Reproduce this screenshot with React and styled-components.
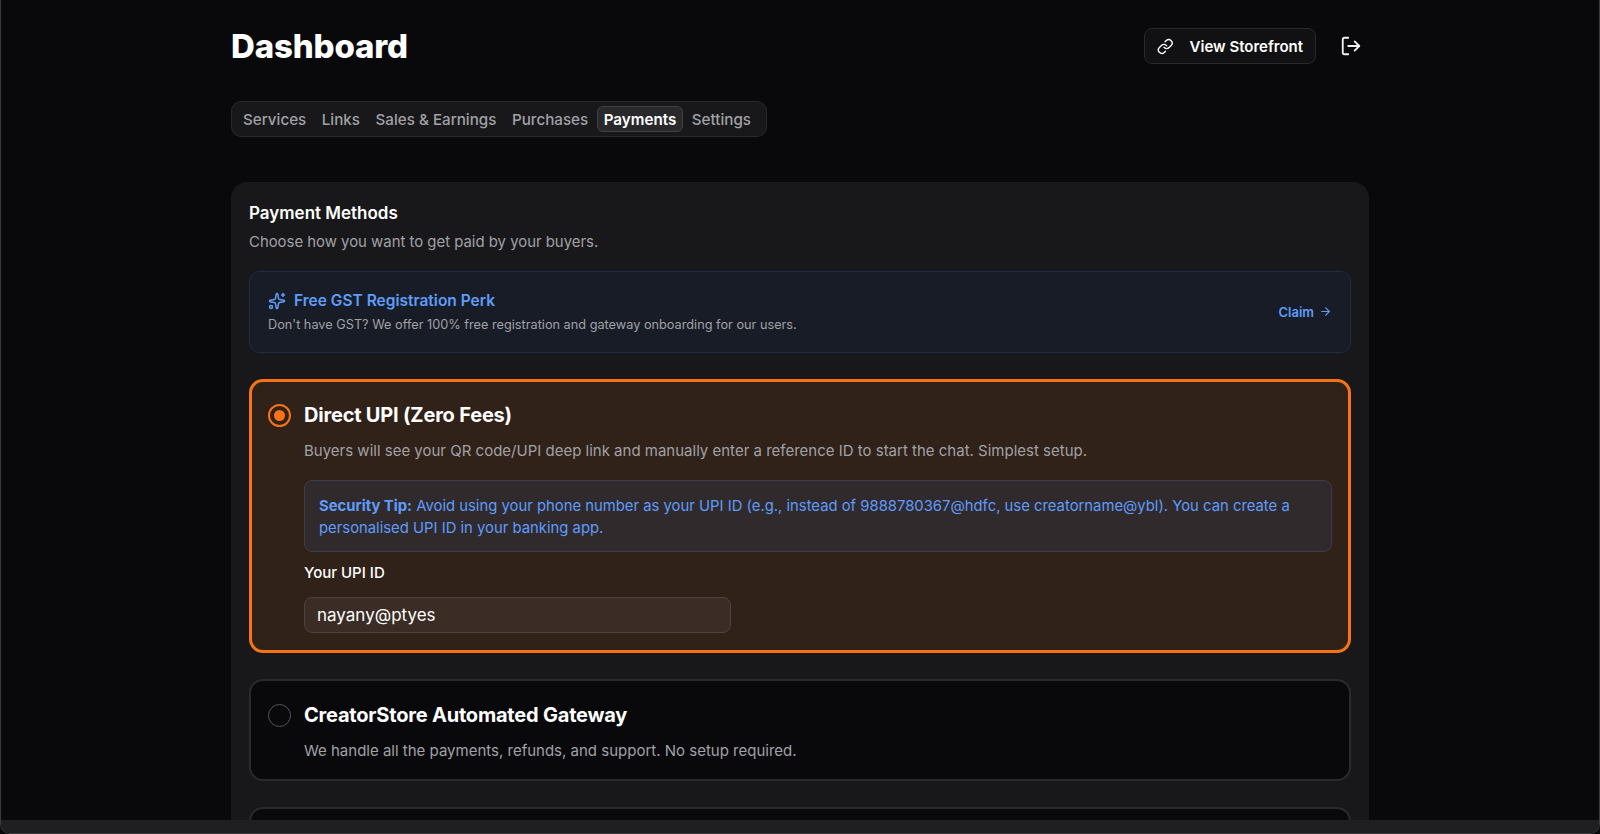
import styled, { createGlobalStyle } from "styled-components";
import { Link, LogOut, Sparkles, ArrowRight } from "lucide-react";

const TABS = ["Services", "Links", "Sales & Earnings", "Purchases", "Payments", "Settings"];

const GlobalStyle = createGlobalStyle`
  html, body {
    margin: 0;
    height: 100%;
    background: #09090b;
  }
  body {
    font-family: Inter, "Liberation Sans", sans-serif;
    color: #fff;
    -webkit-font-smoothing: antialiased;
  }
  * {
    box-sizing: border-box;
  }
`;

const Frame = styled.div`
  height: 834px;
  display: flex;
  flex-direction: column;
  overflow: hidden;
  border-left: 1px solid #3a3a3d;
  border-right: 1px solid #3a3a3d;
  border-bottom: 1px solid #3a3a3d;
  border-radius: 0 0 10px 10px;
`;

const Scroller = styled.div`
  flex: 1;
  min-height: 0;
  overflow: hidden;
`;

const Page = styled.main`
  width: 1138px;
  margin: 0 auto;
  padding-top: 28px;
`;

const Header = styled.header`
  height: 36px;
  display: flex;
  align-items: center;
  justify-content: space-between;
`;

const Title = styled.h1`
  margin: 0;
  font-size: 33px;
  line-height: 36px;
  font-weight: 800;
  letter-spacing: -0.15px;
`;

const HeaderActions = styled.div`
  display: flex;
  align-items: center;
  gap: 24px;
  padding-right: 7px;
`;

const StoreButton = styled.button`
  height: 36px;
  width: 172px;
  display: flex;
  align-items: center;
  gap: 16px;
  padding: 0 12px;
  background: #111113;
  border: 1px solid #29292c;
  border-radius: 8px;
  color: #fff;
  white-space: nowrap;
  font: 600 15px Inter, "Liberation Sans", sans-serif;
`;

const IconButton = styled.button`
  display: flex;
  padding: 0;
  background: none;
  border: 0;
  color: #f2f2f2;
`;

const TabBar = styled.nav`
  display: inline-flex;
  align-items: center;
  height: 36px;
  margin-top: 37px;
  padding: 0 6px 0 4px;
  background: #18181a;
  border: 1px solid #29292c;
  border-radius: 10px;
`;

const Tab = styled.span`
  display: flex;
  align-items: center;
  height: 26px;
  padding: 0 6px;
  margin-right: 1.5px;
  font-size: 15.2px;
  font-weight: ${(p) => (p.$active ? 600 : 500)};
  color: ${(p) => (p.$active ? "#fff" : "#a1a1a6")};
  background: ${(p) => (p.$active ? "#29292b" : "transparent")};
  border: 1px solid ${(p) => (p.$active ? "#414144" : "transparent")};
  border-radius: 6px;
`;

const Panel = styled.section`
  margin-top: 45px;
  padding: 21px 18px 40px;
  background: #18181a;
  border-radius: 16px;
`;

const PanelTitle = styled.h2`
  margin: 0;
  font-size: 17px;
  line-height: 20px;
  font-weight: 600;
`;

const PanelSub = styled.p`
  margin: 9px 0 0;
  font-size: 14.9px;
  line-height: 20px;
  color: #a1a1a6;
`;

const Perk = styled.div`
  height: 82px;
  margin-top: 19px;
  padding: 1px 18px 0;
  display: flex;
  align-items: center;
  justify-content: space-between;
  background: #181c26;
  border: 1px solid #1f2c48;
  border-radius: 10px;
`;

const PerkHead = styled.div`
  display: flex;
  align-items: center;
  gap: 8px;
  color: #5f9cfa;
  font-size: 15.5px;
  line-height: 20px;
  font-weight: 600;
`;

const PerkText = styled.p`
  margin: 5px 0 0;
  font-size: 12.73px;
  line-height: 18px;
  color: #a1a1a6;
`;

const ClaimLink = styled.a`
  display: flex;
  align-items: center;
  gap: 5px;
  margin-bottom: 2px;
  color: #5f9cfa;
  font-size: 13px;
  font-weight: 600;
`;

const Option = styled.div`
  margin-top: 26px;
  padding: ${(p) => (p.$selected ? "17px 16px" : "18px 17px")};
  display: flex;
  gap: 13px;
  min-height: ${(p) => p.$height || "auto"};
  background: ${(p) => (p.$selected ? "#302119" : "#09090b")};
  border: ${(p) => (p.$selected ? "3px solid #f97316" : "2px solid #2a2a2d")};
  border-radius: 14px;
`;

const Radio = styled.span`
  flex: none;
  width: 23px;
  height: 23px;
  margin-top: 5px;
  display: flex;
  align-items: center;
  justify-content: center;
  border: ${(p) => (p.$checked ? "2px solid #f97316" : "1.5px solid #56565a")};
  border-radius: 50%;

  &::after {
    content: "";
    display: ${(p) => (p.$checked ? "block" : "none")};
    width: 11px;
    height: 11px;
    border-radius: 50%;
    background: #f97316;
  }
`;

const OptionBody = styled.div`
  flex: 1;
  min-width: 0;
`;

const OptionTitle = styled.h3`
  margin: 0;
  font-size: 20px;
  line-height: 32px;
  font-weight: 700;
  letter-spacing: -0.2px;
`;

const OptionText = styled.p`
  margin: 10px 0 0;
  font-size: 15px;
  line-height: 20px;
  color: #a1a1a6;
`;

const Tip = styled.div`
  margin-top: 19px;
  padding: 14px 14px 12px;
  background: #302a2d;
  border: 1px solid #413d48;
  border-radius: 8px;
  font-size: 14.83px;
  line-height: 22px;
  color: #5f9cfa;

  strong {
    font-weight: 700;
  }
`;

const FieldLabel = styled.label`
  display: block;
  margin-top: 11px;
  font-size: 15px;
  line-height: 20px;
  font-weight: 500;
`;

const TextInput = styled.input`
  display: block;
  width: 427px;
  height: 36px;
  margin-top: 14px;
  padding: 0 12px;
  background: #3b2d26;
  border: 1px solid #4a4340;
  border-radius: 8px;
  outline: 0;
  color: #fff;
  font: 400 17px Inter, "Liberation Sans", sans-serif;
`;

const BottomBar = styled.div`
  flex: none;
  height: 13px;
  background: #1f1f21;
`;

const App = () => {
  return (
    <>
      <GlobalStyle />
      <Frame>
        <Scroller>
          <Page>
            <Header>
              <Title>Dashboard</Title>
              <HeaderActions>
                <StoreButton>
                  <Link size={17} strokeWidth={2} />
                  View Storefront
                </StoreButton>
                <IconButton>
                  <LogOut size={22} strokeWidth={2} />
                </IconButton>
              </HeaderActions>
            </Header>

            <TabBar>
              {TABS.map((tab) => (
                <Tab key={tab} $active={tab === "Payments"}>
                  {tab}
                </Tab>
              ))}
            </TabBar>

            <Panel>
              <PanelTitle>Payment Methods</PanelTitle>
              <PanelSub>Choose how you want to get paid by your buyers.</PanelSub>

              <Perk>
                <div>
                  <PerkHead>
                    <Sparkles size={18} strokeWidth={2} />
                    Free GST Registration Perk
                  </PerkHead>
                  <PerkText>
                    Don't have GST? We offer 100% free registration and gateway onboarding for our users.
                  </PerkText>
                </div>
                <ClaimLink>
                  Claim
                  <ArrowRight size={13} strokeWidth={2} />
                </ClaimLink>
              </Perk>

              <Option $selected>
                <Radio $checked />
                <OptionBody>
                  <OptionTitle>Direct UPI (Zero Fees)</OptionTitle>
                  <OptionText>
                    Buyers will see your QR code/UPI deep link and manually enter a reference ID to start the chat. Simplest setup.
                  </OptionText>
                  <Tip>
                    <strong>Security Tip:</strong> Avoid using your phone number as your UPI ID (e.g., instead of 9888780367@hdfc, use creatorname@ybl). You can create a personalised UPI ID in your banking app.
                  </Tip>
                  <FieldLabel>Your UPI ID</FieldLabel>
                  <TextInput defaultValue="nayany@ptyes" />
                </OptionBody>
              </Option>

              <Option>
                <Radio />
                <OptionBody>
                  <OptionTitle>CreatorStore Automated Gateway</OptionTitle>
                  <OptionText>We handle all the payments, refunds, and support. No setup required.</OptionText>
                </OptionBody>
              </Option>

              <Option $height="100px" />
            </Panel>
          </Page>
        </Scroller>
        <BottomBar />
      </Frame>
    </>
  );
};

export default App;
